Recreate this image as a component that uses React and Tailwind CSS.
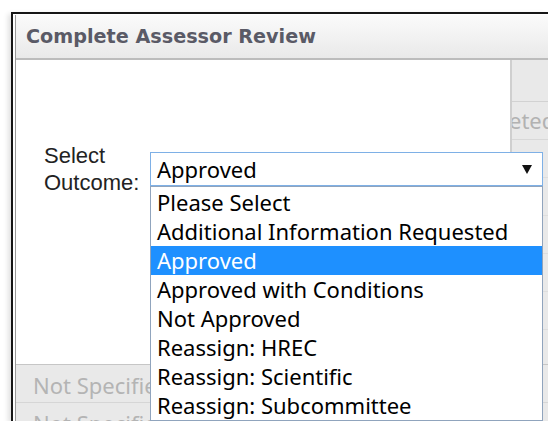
import React from "react";

const outcomes = [
  "Please Select",
  "Additional Information Requested",
  "Approved",
  "Approved with Conditions",
  "Not Approved",
  "Reassign: HREC",
  "Reassign: Scientific",
  "Reassign: Subcommittee",
];

const segoe = "font-['Noto_Sans',sans-serif]";

const App = () => {
  const selected = "Approved";

  return (
    <div className="w-[548px] h-[421px] overflow-hidden bg-white pl-[11px] pt-[12px]">
      <div className="h-full border-l-2 border-t-2 border-[#161616] pl-[2px] pt-[1px] shadow-[-3px_2px_5px_rgba(0,0,0,0.12)]">
        <div className="h-full border-l border-[#9a9a9a] flex flex-col">
          {/* dialog title */}
          <div className="h-[45px] shrink-0 flex items-center pl-[10px] bg-gradient-to-b from-[#fbfbfb] to-[#e9e9e9] border-b-2 border-[#bcbcbc]">
            <span className="font-['DejaVu_Sans',sans-serif] font-bold text-[19.2px] text-[#5a5a66] leading-none">
              Complete Assessor Review
            </span>
          </div>

          <div className="flex h-[304px] shrink-0">
            {/* dialog body */}
            <div className="w-[494px] shrink-0 bg-white pt-[82px] pl-[28px] flex items-start relative z-10">
              <label className="w-[106px] shrink-0 font-['Liberation_Sans',Arial,sans-serif] text-[22px] leading-[27px] text-[#222]">
                Select
                <br />
                Outcome:
              </label>
              <div className="relative mt-[10px] w-[393px] shrink-0">
                <div className="h-[34px] border border-[#7eb0e6] bg-white flex items-center justify-between pl-[6px] pr-[10px]">
                  <span className={`${segoe} text-[22px] leading-[29px] text-black`}>{selected}</span>
                  <svg width="10" height="9" viewBox="0 0 10 9">
                    <path d="M0 0h10L5 9z" fill="#111" />
                  </svg>
                </div>
                <ul className="absolute left-0 top-[34px] w-full border border-[#90a4bd] bg-white pt-[1px]">
                  {outcomes.map((o) => (
                    <li
                      key={o}
                      className={`h-[29px] pl-[6px] ${segoe} text-[22px] leading-[29px] whitespace-nowrap ${
                        o === selected ? "bg-[#1e90ff] text-white" : "text-black"
                      }`}
                    >
                      {o}
                    </li>
                  ))}
                </ul>
              </div>
            </div>

            {/* greyed table column behind the dialog */}
            <div className="flex-1 border-l-2 border-[#cfcfcf] bg-[#e9e9e9] flex flex-col overflow-hidden">
              <div className="h-[42px] shrink-0 border-b border-[#d2d2d2]" />
              <div className="h-[38px] shrink-0 border-b border-[#d8d8d8] flex items-center">
                <span className={`${segoe} text-[22px] text-[#b2b2b2] whitespace-nowrap ml-[-70px]`}>
                  Completed
                </span>
              </div>
              <div className="h-[38px] shrink-0 border-b border-[#dedede]" />
              <div className="h-[38px] shrink-0 border-b border-[#dedede]" />
              <div className="h-[38px] shrink-0 border-b border-[#dedede]" />
              <div className="h-[38px] shrink-0 border-b border-[#dedede]" />
              <div className="h-[38px] shrink-0 border-b border-[#dedede]" />
            </div>
          </div>

          {/* greyed table rows below the dialog */}
          <div className="flex-1 bg-[#e9e9e9] border-t border-[#c6c6c6]">
            {["Not Specified", "Not Specified"].map((t, i) => (
              <div
                key={i}
                className="h-[38px] border-b border-[#d6d6d6] flex items-center pl-[17px] pt-[3px]"
              >
                <span className={`${segoe} text-[22px] text-[#b4b4b4]`}>{t}</span>
              </div>
            ))}
          </div>
        </div>
      </div>
    </div>
  );
};

export default App;
